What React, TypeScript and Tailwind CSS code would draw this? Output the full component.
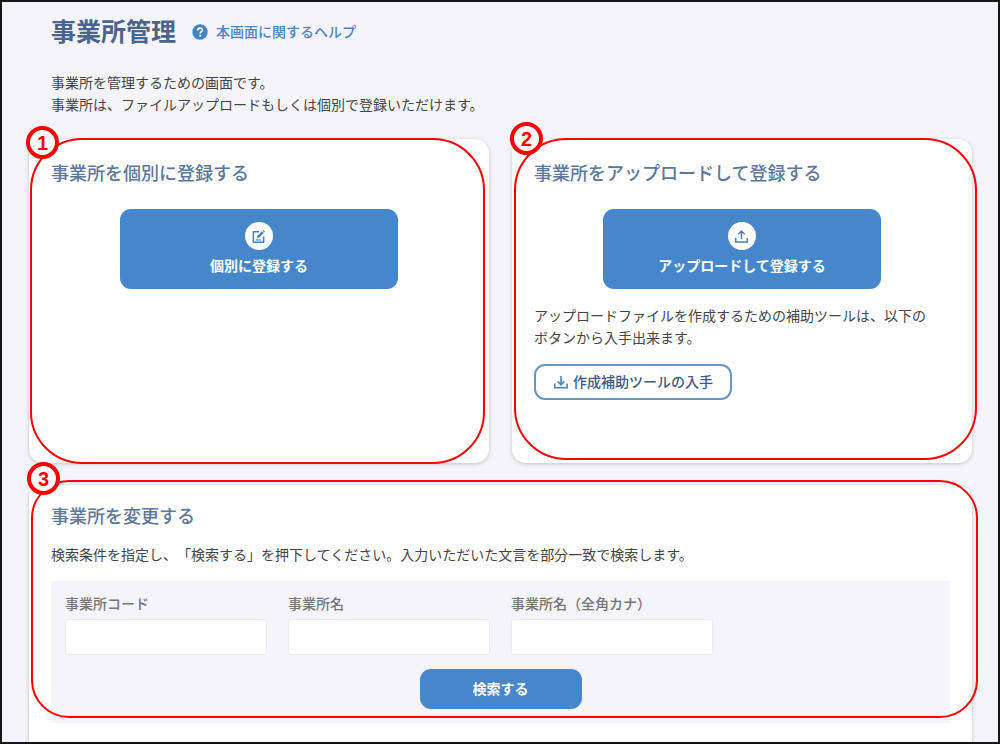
import type { ReactNode } from "react";
import { clsx } from "clsx";

type CardProps = {
  title: string;
  marker: string;
  markerClass: string;
  outlineClass: string;
  className?: string;
  children: ReactNode;
};

export default function App() {
  return (
    <div className="flex min-h-screen flex-col border-2 border-[#161616] bg-[#f5f4fa] pr-[26px] pl-[27px] font-['Liberation_Sans','Noto_Sans_CJK_JP',sans-serif] text-sm text-[#444] [text-spacing-trim:space-all]">
      <header className="px-[22px] pt-3">
        <div className="flex items-center gap-4">
          <h1 className="text-[25px] leading-9 font-bold text-[#4a648d]">事業所管理</h1>
          <a href="#help" className="flex items-center gap-2 font-medium text-[#4a84c4]">
            <HelpIcon />
            本画面に関するヘルプ
          </a>
        </div>
        <p className="mt-[22px] leading-[22px]">
          事業所を管理するための画面です。
          <br />
          事業所は、ファイルアップロードもしくは個別で登録いただけます。
        </p>
      </header>

      <main className="mt-[23px] flex flex-1 flex-col gap-[22px]">
        <div className="grid grid-cols-2 gap-[23px]">
          <Card
            title="事業所を個別に登録する"
            marker="1"
            markerClass="-top-[13px] -left-[3px]"
            outlineClass="-top-px left-px right-1 -bottom-px rounded-[52px]"
            className="min-h-[324px] rounded-[14px] pt-[21px]"
          >
            <BigButton icon={<EditIcon />} label="個別に登録する" />
          </Card>
          <Card
            title="事業所をアップロードして登録する"
            marker="2"
            markerClass="-top-[17px] -left-0.5"
            outlineClass="-top-px left-0.5 -right-[5px] bottom-[3px] rounded-[52px]"
            className="min-h-[324px] rounded-[14px] pt-[21px]"
          >
            <BigButton icon={<TrayIcon className="size-[15px]" up />} label="アップロードして登録する" />
            <p className="mt-4 leading-[22px]">
              アップロードファイルを作成するための補助ツールは、以下の
              <br />
              ボタンから入手出来ます。
            </p>
            <button
              type="button"
              className="mt-[15px] flex h-9 w-[198px] items-center justify-center gap-1 rounded-[11px] border-2 border-[#6796c6] bg-white font-medium text-[#41597f]"
            >
              <TrayIcon className="size-4 text-[#4a84c4]" />
              作成補助ツールの入手
            </button>
          </Card>
        </div>

        <Card
          title="事業所を変更する"
          marker="3"
          markerClass="-top-[23px] -left-0.5"
          outlineClass="-top-[5px] left-0.5 -right-1.5 h-[238px] rounded-[38px]"
          className="flex-1 rounded-t-[14px] pt-[18px] pb-[17px]"
        >
          <p className="mt-[13px] leading-[22px]">
            検索条件を指定し、「検索する」を押下してください。入力いただいた文言を部分一致で検索します。
          </p>
          <form className="mt-[15px] bg-[#f5f4fa] px-[14px] pt-3 pb-[14px]">
            <div className="grid grid-cols-4 gap-[21px]">
              <Field id="office-code" label="事業所コード" />
              <Field id="office-name" label="事業所名" />
              <Field id="office-kana" label="事業所名（全角カナ）" />
            </div>
            <button
              type="button"
              className="mx-auto mt-[14px] block h-10 w-[162px] rounded-[11px] bg-[#4687cb] font-bold text-white"
            >
              検索する
            </button>
          </form>
        </Card>
      </main>
    </div>
  );
}

function Card({ title, marker, markerClass, outlineClass, className, children }: CardProps) {
  return (
    <section className={clsx("relative bg-white px-[22px] shadow-[0_1px_4px_rgba(0,0,0,0.2)]", className)}>
      <h2 className="text-[18px] leading-7 font-medium text-[#5b789b]">{title}</h2>
      {children}
      {/* numbered callout drawn over the card */}
      <div className={clsx("pointer-events-none absolute border-2 border-[#ff0000]", outlineClass)} />
      <span
        className={clsx(
          "absolute flex size-[33px] items-center justify-center rounded-full border-4 border-[#ff0000] bg-white text-[20px] leading-none font-bold text-[#ff0000]",
          markerClass,
        )}
      >
        {marker}
      </span>
    </section>
  );
}

function BigButton({ icon, label }: { icon: ReactNode; label: string }) {
  return (
    <button
      type="button"
      className="mx-auto mt-[21px] flex h-20 w-2/3 flex-col items-center justify-center gap-1.5 rounded-[11px] bg-[#4687cb] font-bold text-white"
    >
      <span className="flex size-7 items-center justify-center rounded-full bg-white text-[#4a7fb8]">{icon}</span>
      {label}
    </button>
  );
}

function Field({ id, label }: { id: string; label: string }) {
  return (
    <div>
      <label htmlFor={id} className="block leading-[22px] font-medium text-[#757575]">
        {label}
      </label>
      <input
        id={id}
        type="text"
        className="mt-1 block h-9 w-full rounded-[3px] border border-[#ececf0] bg-white px-2"
      />
    </div>
  );
}

function HelpIcon() {
  return (
    <svg viewBox="0 0 16 16" className="size-4" fill="none" aria-hidden="true">
      <circle cx="8" cy="8" r="7.7" fill="#4283c6" />
      <path
        d="M5.7 6.4c0-1.4 1-2.3 2.4-2.3s2.3.8 2.3 2c0 1.6-2.2 1.7-2.2 3.3"
        stroke="#fff"
        strokeWidth="1.6"
      />
      <circle cx="8.1" cy="11.7" r="1" fill="#fff" />
    </svg>
  );
}

function EditIcon() {
  return (
    <svg viewBox="0 0 16 16" className="size-[15px]" fill="none" stroke="currentColor" aria-hidden="true">
      <path d="M8.5 3H2.5v11h11V8" strokeWidth="1.6" />
      <path d="M6.2 9.8l.5-2.4 5-5 1.9 1.9-5 5z" fill="currentColor" stroke="none" />
      <path d="M12.3 1.8l.8-.8 1.9 1.9-.8.8z" fill="currentColor" stroke="none" />
      <path d="M5 11.7h6" strokeWidth="1.2" />
    </svg>
  );
}

function TrayIcon({ className, up = false }: { className?: string; up?: boolean }) {
  return (
    <svg
      viewBox="0 0 16 16"
      className={className}
      fill="none"
      stroke="currentColor"
      strokeWidth="1.6"
      aria-hidden="true"
    >
      <path d="M1.8 9.6v4.2h12.4V9.6" />
      <path d={up ? "M8 11V2.2M4.6 5.6L8 2.2l3.4 3.4" : "M8 2v8.6M4.6 7.4L8 10.8l3.4-3.4"} />
    </svg>
  );
}
